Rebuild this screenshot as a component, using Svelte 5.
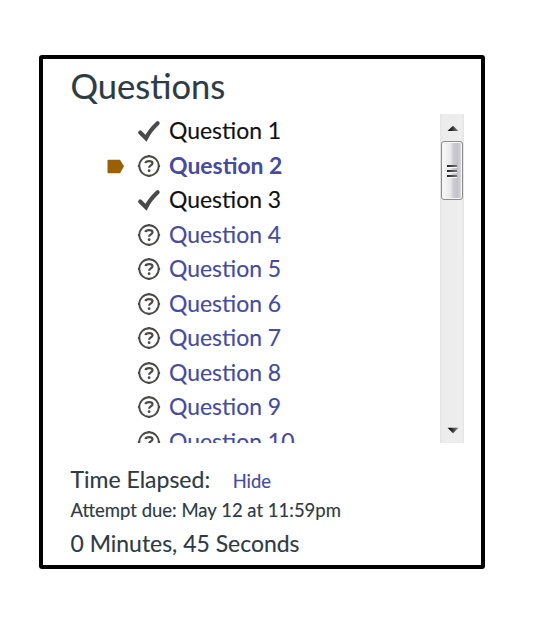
<script>
  const questions = Array.from({ length: 10 }, (_, i) => ({
    number: i + 1,
    answered: i === 0 || i === 2,
    current: i === 1
  }));
</script>

<main>
  <section class="panel">
    <h1>Questions</h1>
    <div class="viewport">
      <ul>
        {#each questions as q}
          <li class:answered={q.answered} class:current={q.current}>
            <span class="marker">
              {#if q.current}
                <svg width="18" height="15" viewBox="0 0 18 15"><path d="M0.5 1.5Q.5 .8 1.3 .8H13L17 7.3L13 14.2H1.3Q.5 14.2 .5 13.5Z" fill="#996107" /></svg>
              {/if}
            </span>
            <span class="icon">
              {#if q.answered}
                <svg width="24" height="24" viewBox="0 0 24 24"><path d="M3.2 13.6L9 19.2Q12.8 11.6 20.6 4.3" fill="none" stroke="#4a4a4c" stroke-width="4.2" stroke-linejoin="miter" stroke-linecap="round" /></svg>
              {:else}
                <svg width="24" height="24" viewBox="0 0 24 24" fill="none" stroke="#4b4a48">
                  <circle cx="12" cy="12" r="9.7" stroke-width="1.9" />
                  <path d="M12 .9V3M12 21V23.1M.9 12H2.5M21.5 12H23.1" stroke-width="2.2" />
                  <path d="M8.5 9.1Q8.8 7.2 12.1 7.2Q15.5 7.2 15.5 9.3Q15.5 10.5 13.7 11.4Q12.1 12.2 12.1 13.8" stroke-width="2.2" />
                  <circle cx="12.1" cy="16.7" r="1.4" fill="#4b4a48" stroke="none" />
                </svg>
              {/if}
            </span>
            <span class="label">Question {q.number}</span>
          </li>
        {/each}
      </ul>
      <div class="scrollbar">
        <svg class="arrow" width="12" height="7" viewBox="0 0 12 7"><path d="M.5 6L6 .8L11.5 6Z" fill="url(#up)" /><defs><linearGradient id="up"><stop offset=".2" stop-color="#111" /><stop offset="1" stop-color="#888" /></linearGradient></defs></svg>
        <div class="thumb"><i></i><i></i><i></i></div>
        <svg class="arrow down" width="12" height="7" viewBox="0 0 12 7"><path d="M.5 .8L6 6.3L11.5 .8Z" fill="url(#down)" /><defs><linearGradient id="down"><stop offset=".2" stop-color="#111" /><stop offset="1" stop-color="#888" /></linearGradient></defs></svg>
      </div>
    </div>
    <div class="elapsed"><span>Time Elapsed:</span><a href="#timer">Hide</a></div>
    <div class="due">Attempt due: May 12 at 11:59pm</div>
    <div class="time">0 Minutes, 45 Seconds</div>
  </section>
</main>

<style>
  :global(body) { margin: 0; background: #fff; }
  main {
    box-sizing: border-box;
    height: 618px;
    padding: 55px 55px 49px 39px;
    font-family: Lato, Carlito, sans-serif;
    color: #2d3b45;
    -webkit-text-stroke: 0.15px currentColor;
  }
  .panel {
    box-sizing: border-box;
    height: 514px;
    border: 4px solid #000;
    border-radius: 3px;
    padding: 0 17px 0 27.5px;
    white-space: nowrap;
  }
  h1 { margin: 0; height: 55px; font-size: 34.5px; font-weight: 400; line-height: 53px; }
  .viewport { display: flex; justify-content: space-between; height: 329px; overflow: hidden; }
  ul { list-style: none; margin: 0; padding: 0 0 0 36.5px; }
  li { display: flex; align-items: center; height: 34.5px; color: #454ba0; font-size: 22.95px; }
  .marker { width: 30px; display: flex; padding-top: 2px; }
  .icon { width: 24px; height: 24px; margin-right: 8px; }
  .label { line-height: 28px; padding-bottom: 2px; }
  svg { display: block; }
  .answered { color: #111; }
  .current { font-weight: 700; -webkit-text-stroke: 0; }
  .scrollbar {
    box-sizing: border-box;
    width: 24px;
    height: 329px;
    display: flex;
    flex-direction: column;
    align-items: center;
    background: linear-gradient(90deg, #e2e2e2, #ececec 10%, #eee 90%, #e4e4e4);
    padding: 11px 0 9px;
  }
  .arrow { margin-left: 1px; }
  .thumb {
    box-sizing: border-box;
    width: 22px;
    height: 50px;
    flex: 0 0 59px;
    margin-top: 9px;
    border: 1.5px solid #8d8d90;
    border-radius: 3px;
    background: linear-gradient(90deg, #fafafa, #e8e8ec 42%, #cbcbd0 58%, #c2c2c8 78%, #dedee2);
    box-shadow: inset 0 0 0 1px #f5f5f5;
    display: flex;
    flex-direction: column;
    align-items: center;
    justify-content: center;
    gap: 3px;
  }
  .thumb i { width: 10px; height: 2px; background: linear-gradient(90deg, #222, #77777a); box-shadow: 0 1px #f8f8f8; }
  .down { margin-top: auto; }
  .elapsed { display: flex; align-items: baseline; margin-top: 20px; height: 34px; line-height: 33px; font-size: 23px; }
  .elapsed a { margin-left: 22.5px; color: #454ba0; font-size: 18.4px; text-decoration: none; }
  .due { height: 28px; line-height: 27px; font-size: 18.5px; }
  .time { height: 36px; line-height: 36px; font-size: 22.95px; }
</style>
